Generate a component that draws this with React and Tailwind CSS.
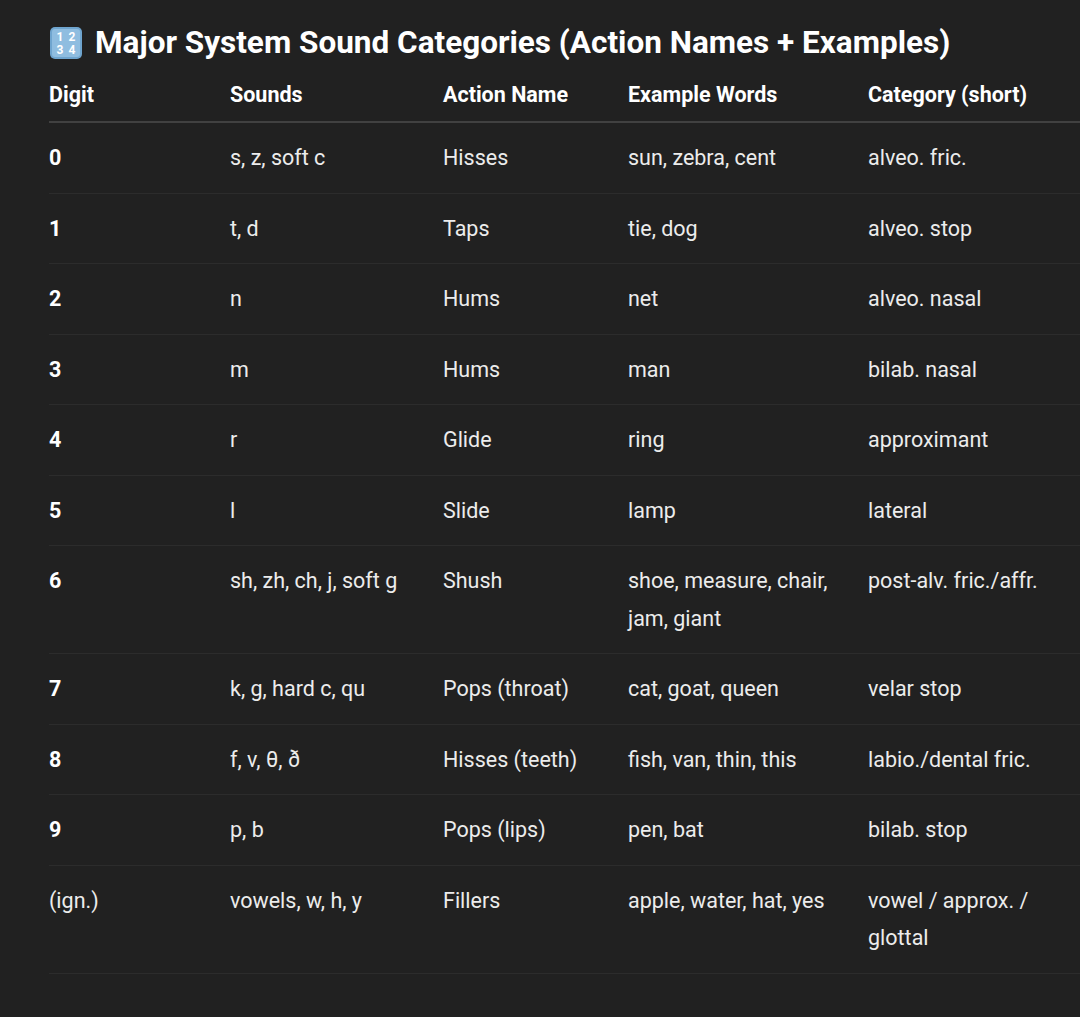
const rows = [
  ['0', 's, z, soft c', 'Hisses', 'sun, zebra, cent', 'alveo. fric.'],
  ['1', 't, d', 'Taps', 'tie, dog', 'alveo. stop'],
  ['2', 'n', 'Hums', 'net', 'alveo. nasal'],
  ['3', 'm', 'Hums', 'man', 'bilab. nasal'],
  ['4', 'r', 'Glide', 'ring', 'approximant'],
  ['5', 'l', 'Slide', 'lamp', 'lateral'],
  ['6', 'sh, zh, ch, j, soft g', 'Shush', 'shoe, measure, chair, jam, giant', 'post-alv. fric./affr.'],
  ['7', 'k, g, hard c, qu', 'Pops (throat)', 'cat, goat, queen', 'velar stop'],
  ['8', 'f, v, θ, ð', 'Hisses (teeth)', 'fish, van, thin, this', 'labio./dental fric.'],
  ['9', 'p, b', 'Pops (lips)', 'pen, bat', 'bilab. stop'],
  ['(ign.)', 'vowels, w, h, y', 'Fillers', 'apple, water, hat, yes', 'vowel / approx. / glottal'],
];

const cols = 'grid grid-cols-[181px_213px_185px_240px_200px]';

const Keycap = () => (
  <svg width="34" height="34" viewBox="0 0 34 34" className="shrink-0">
    <rect x="1" y="1" width="32" height="32" rx="5" fill="#6fa5cf" />
    <rect x="3" y="3" width="28" height="28" rx="3" fill="#8fbde0" />
    <text x="11" y="15" fontSize="12" fill="#fff" textAnchor="middle" fontFamily="Roboto" fontWeight="bold">1</text>
    <text x="23" y="15" fontSize="12" fill="#fff" textAnchor="middle" fontFamily="Roboto" fontWeight="bold">2</text>
    <text x="11" y="28" fontSize="12" fill="#fff" textAnchor="middle" fontFamily="Roboto" fontWeight="bold">3</text>
    <text x="23" y="28" fontSize="12" fill="#fff" textAnchor="middle" fontFamily="Roboto" fontWeight="bold">4</text>
  </svg>
);

export default function App() {
  return (
    <div className="min-h-screen bg-[#212121] text-[#ececec] overflow-hidden pl-[49px] pt-[24px]" style={{ fontFamily: 'Roboto, "Liberation Sans", sans-serif' }}>
      <h1 className="flex items-center gap-[12px] text-[31.5px] font-bold leading-[38px] text-white whitespace-nowrap">
        <Keycap />
        Major System Sound Categories (Action Names + Examples)
      </h1>
      <div className="w-[1100px] mt-[18px]">
        <div className={`${cols} text-[21.5px] font-bold leading-[30px] pb-[11px] border-b-2 border-[#414141] text-white`}>
          <div>Digit</div><div>Sounds</div><div>Action Name</div><div>Example Words</div><div>Category (short)</div>
        </div>
        {rows.map((r, i) => (
          <div key={i} className={`${cols} text-[21.5px] leading-[37.5px] py-[16px] border-b border-[#2c2c2c]`}>
            {r.map((c, j) => (
              <div key={j} className={`pr-[24px] ${j === 0 && i < 10 ? 'font-bold text-white' : ''}`}>{c}</div>
            ))}
          </div>
        ))}
      </div>
    </div>
  );
}
